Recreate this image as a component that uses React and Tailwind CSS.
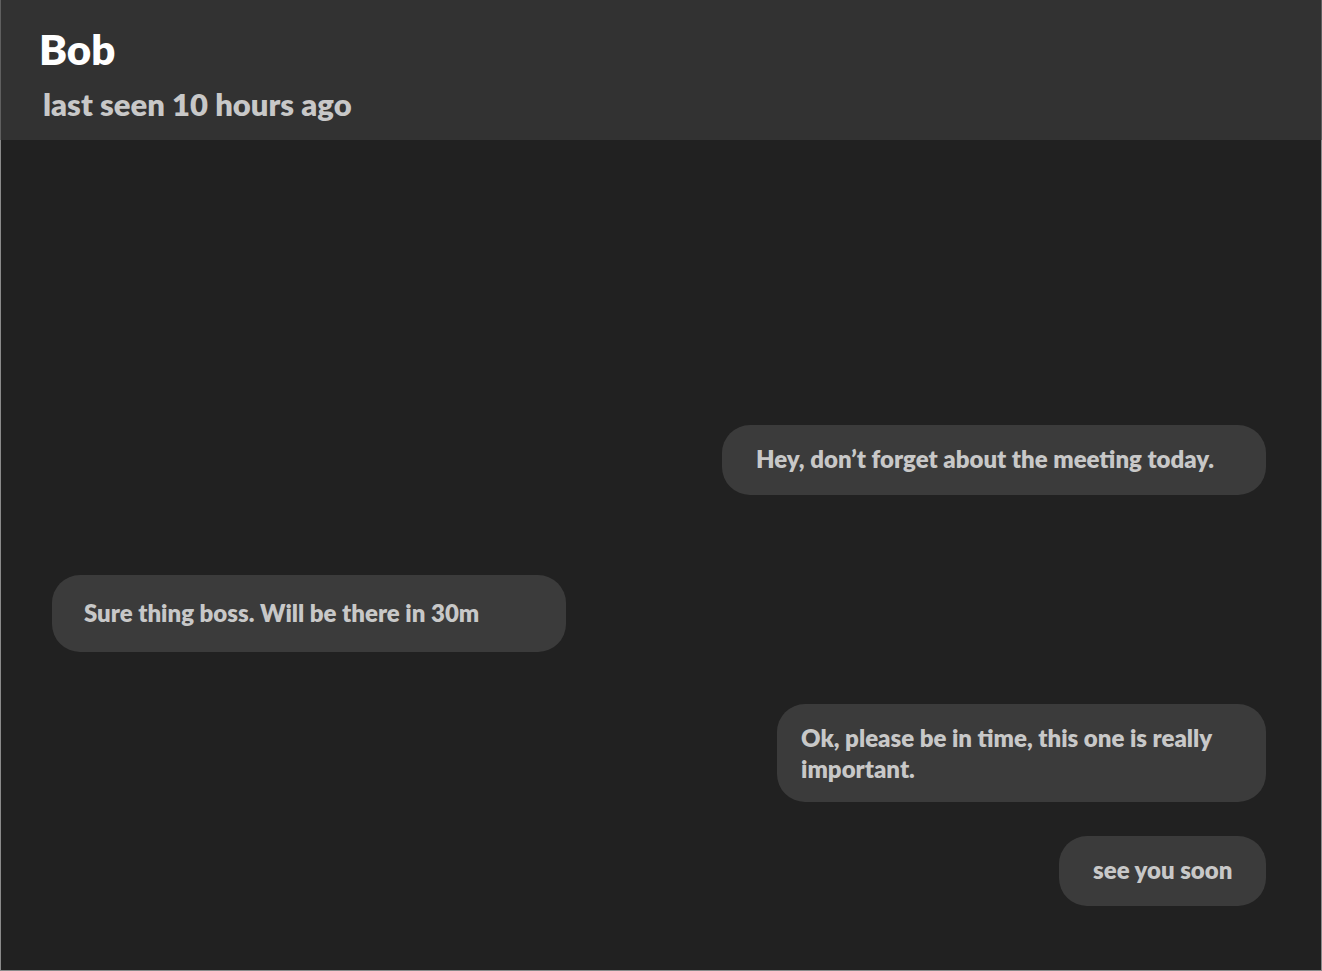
const messages = [
  { text: "Hey, don’t forget about the meeting today.", box: "self-end w-[544px] px-[34px] pt-[18px] pb-[21px]" },
  { text: "Sure thing boss. Will be there in 30m", box: "self-start mt-20 w-[514px] px-8 pt-[22px] pb-6" },
  { text: "Ok, please be in time, this one is really important.", box: "self-end mt-[52px] w-[489px] px-6 py-[18px]" },
  { text: "see you soon", box: "self-end mt-[34px] w-[207px] pl-[34px] pr-6 pt-[18px] pb-[21px]" },
];

export default function App() {
  return (
    <div className="flex min-h-screen flex-col border-b border-[#8a8a8a] bg-[#212121] font-['Lato',sans-serif] font-extrabold text-[#c8c8c8]">
      <header className="border-x border-[#5f5f5f] bg-[#323232] pl-[38px] pt-6 pb-[14px]">
        <h1 className="text-[42px] leading-[50px] text-white">Bob</h1>
        <p className="mt-2 pl-1 text-[31px] leading-[44px]">last seen 10 hours ago</p>
      </header>
      <main className="flex grow flex-col justify-end border-x border-[#8a8a8a] pb-16 pl-[51px] pr-[55px]">
        {messages.map((m) => (
          <p key={m.text} className={`max-w-full rounded-[28px] bg-[#3b3b3b] text-[24px] leading-[31px] ${m.box}`}>
            {m.text}
          </p>
        ))}
      </main>
    </div>
  );
}
